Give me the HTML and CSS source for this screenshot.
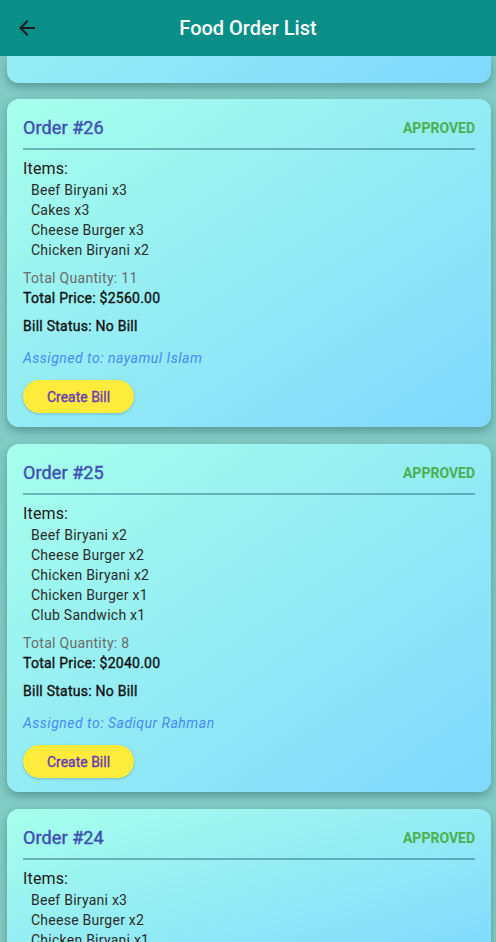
FILE: index.html
```html
<!DOCTYPE html>
<html>
<head>
<meta charset="utf-8">
<link rel="stylesheet" href="styles.css">
</head>
<body>
<header class="appbar">
  <svg class="back" viewBox="0 0 24 24" width="24" height="24"><path d="M20 11H7.83l5.59-5.59L12 4l-8 8 8 8 1.41-1.41L7.83 13H20v-2z" fill="#1c1c1c"/></svg>
  <h1 class="title">Food Order List</h1>
</header>
<main class="list">
  <div class="card stub"></div>

  <section class="card">
    <div class="card-head"><span class="order">Order #26</span><span class="status">APPROVED</span></div>
    <div class="divider"></div>
    <div class="items-label">Items:</div>
    <ul class="items">
      <li>Beef Biryani x3</li>
      <li>Cakes x3</li>
      <li>Cheese Burger x3</li>
      <li>Chicken Biryani x2</li>
    </ul>
    <div class="qty">Total Quantity: 11</div>
    <div class="price">Total Price: $2560.00</div>
    <div class="bill">Bill Status: No Bill</div>
    <div class="assigned">Assigned to: nayamul Islam</div>
    <button class="btn">Create Bill</button>
  </section>

  <section class="card">
    <div class="card-head"><span class="order">Order #25</span><span class="status">APPROVED</span></div>
    <div class="divider"></div>
    <div class="items-label">Items:</div>
    <ul class="items">
      <li>Beef Biryani x2</li>
      <li>Cheese Burger x2</li>
      <li>Chicken Biryani x2</li>
      <li>Chicken Burger x1</li>
      <li>Club Sandwich x1</li>
    </ul>
    <div class="qty">Total Quantity: 8</div>
    <div class="price">Total Price: $2040.00</div>
    <div class="bill">Bill Status: No Bill</div>
    <div class="assigned">Assigned to: Sadiqur Rahman</div>
    <button class="btn">Create Bill</button>
  </section>

  <section class="card">
    <div class="card-head"><span class="order">Order #24</span><span class="status">APPROVED</span></div>
    <div class="divider"></div>
    <div class="items-label">Items:</div>
    <ul class="items">
      <li>Beef Biryani x3</li>
      <li>Cheese Burger x2</li>
      <li>Chicken Biryani x1</li>
    </ul>
  </section>
</main>
</body>
</html>
```
FILE: styles.css
```css
* { box-sizing: border-box; }
html, body {
  margin: 0;
  padding: 0;
}
body {
  width: 496px;
  height: 942px;
  overflow: hidden;
  background: #80cbc4;
  font-family: Roboto, "Noto Sans", sans-serif;
}
.appbar {
  height: 56px;
  background: #098f87;
  display: flex;
  align-items: center;
  position: relative;
  padding-left: 15px;
}
.back {
  display: block;
  flex: none;
}
.title {
  position: absolute;
  left: 0;
  right: 0;
  margin: 0;
  text-align: center;
  color: #fff;
  font-size: 20px;
  font-weight: 500;
  pointer-events: none;
}
.list {
  display: flex;
  flex-direction: column;
  gap: 17px;
  padding: 0 5px 0 7px;
}
.card {
  background: linear-gradient(to bottom right, #a7ffeb, #80d8ff);
  border-radius: 12px;
  box-shadow: 0 4px 8px rgba(0, 40, 40, 0.3);
  padding: 16px 16px 14px 16px;
  display: flex;
  flex-direction: column;
  align-items: flex-start;
}
.card.stub {
  height: 27px;
  padding: 0;
  border-radius: 0 0 12px 12px;
  background-size: 100% 328px;
  background-position: bottom;
  margin-bottom: -1px;
}
.card-head {
  width: 100%;
  height: 25px;
  display: flex;
  justify-content: space-between;
  align-items: center;
}
.order {
  font-size: 18px;
  font-weight: 400;
  -webkit-text-stroke: 0.45px currentColor;
  letter-spacing: 0.1px;
  color: #3f51b5;
}
.status {
  font-size: 14px;
  font-weight: 700;
  color: #4caf50;
}
.divider {
  width: 100%;
  height: 2px;
  margin: 8px 0 7px;
  background: rgba(20, 80, 100, 0.4);
}
.items-label {
  font-size: 16px;
  line-height: 22px;
  margin-top: 1px;
  letter-spacing: 0.15px;
  color: #1a1a1a;
}
.items {
  list-style: none;
  margin: 0;
  padding: 0 0 0 8px;
  font-size: 14px;
  line-height: 20px;
  letter-spacing: 0.25px;
  color: #2b2b2b;
}
.qty {
  margin-top: 8px;
  font-size: 14px;
  line-height: 20px;
  letter-spacing: 0.3px;
  color: #6a6a6a;
}
.price {
  font-size: 14px;
  line-height: 20px;
  font-weight: 400;
  -webkit-text-stroke: 0.35px currentColor;
  letter-spacing: 0.25px;
  color: #111;
}
.bill {
  margin-top: 8px;
  font-size: 14px;
  line-height: 20px;
  font-weight: 400;
  -webkit-text-stroke: 0.35px currentColor;
  letter-spacing: 0.25px;
  color: #111;
}
.assigned {
  margin-top: 12px;
  font-size: 14px;
  line-height: 20px;
  font-style: italic;
  letter-spacing: 0.5px;
  color: #448aff;
}
.btn {
  margin-top: 12px;
  height: 33px;
  width: 111px;
  border: none;
  border-radius: 17px;
  background: #ffeb3b;
  color: #673ab7;
  font-family: Roboto, sans-serif;
  font-size: 14px;
  font-weight: 400;
  -webkit-text-stroke: 0.35px currentColor;
  box-shadow: 0 1px 3px rgba(0, 0, 0, 0.2);
  padding: 0;
}
```
